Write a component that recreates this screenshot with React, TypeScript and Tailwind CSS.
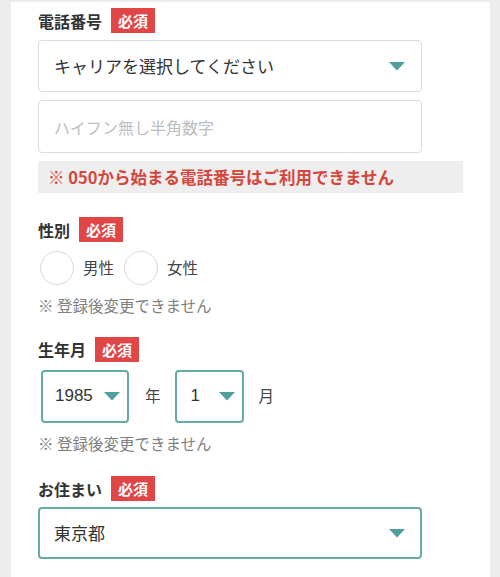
import React from "react";

const font = { fontFamily: '"Noto Sans CJK JP", "Noto Sans", sans-serif' };

function Tri() {
  return (
    <svg width="16" height="9" viewBox="0 0 16 9" className="shrink-0">
      <polygon points="0,0 16,0 8,8.5" fill="#4e9e9b" />
    </svg>
  );
}

function Label({ text }: { text: string }) {
  return (
    <div className="flex items-center h-[25px]">
      <span className="text-[16px] font-bold text-[#333] leading-none">{text}</span>
      <span className="ml-[9px] h-[25px] px-[7px] bg-[#e04646] text-white text-[15px] font-bold leading-[25px]">必須</span>
    </div>
  );
}

function Note({ className = "" }: { className?: string }) {
  return <div className={"text-[15.5px] text-[#808080] leading-none " + className}>※ 登録後変更できません</div>;
}

export default function App() {
  return (
    <div className="w-[500px] h-[577px] bg-[#ededed] pt-[2px] pl-[11px] pr-[10px] overflow-hidden" style={font}>
      <div className="bg-white h-full pl-[27px] pt-[6px]">
        <Label text="電話番号" />
        <div className="mt-[7px] w-[384px] h-[52px] border border-[#dcdcdc] rounded-[4px] flex items-center justify-between pl-[15px] pr-[16px]">
          <span className="text-[17px] text-[#333]">キャリアを選択してください</span>
          <Tri />
        </div>
        <div className="mt-[8px] w-[384px] h-[53px] border border-[#dcdcdc] rounded-[4px] flex items-center pl-[15px]">
          <span className="text-[16px] text-[#bdbdbd]">ハイフン無し半角数字</span>
        </div>
        <div className="mt-[8px] w-[425px] h-[32px] bg-[#eeeeee] flex items-center pl-[10px]">
          <span className="text-[16.5px] font-bold text-[#d6453a]">※ 050から始まる電話番号はご利用できません</span>
        </div>

        <div className="mt-[24px]">
          <Label text="性別" />
        </div>
        <div className="mt-[9px] flex items-center pl-[2px]">
          <span className="w-[34px] h-[34px] rounded-full border border-[#d8d8d8]" />
          <span className="ml-[9px] text-[15.5px] text-[#444]">男性</span>
          <span className="ml-[10px] w-[34px] h-[34px] rounded-full border border-[#d8d8d8]" />
          <span className="ml-[9px] text-[15.5px] text-[#444]">女性</span>
        </div>
        <Note className="mt-[13px]" />

        <div className="mt-[23px]">
          <Label text="生年月" />
        </div>
        <div className="mt-[8px] flex items-center pl-[3px]">
          <div className="w-[88px] h-[53px] border-2 border-[#66aaa6] rounded-[4px] flex items-center justify-between pl-[12px] pr-[7px]">
            <span className="text-[17px] text-[#333]" style={{ fontFamily: '"Liberation Sans", sans-serif' }}>1985</span>
            <Tri />
          </div>
          <span className="ml-[16px] text-[15.5px] text-[#444]">年</span>
          <div className="ml-[14px] w-[69px] h-[53px] border-2 border-[#66aaa6] rounded-[4px] flex items-center justify-between pl-[14px] pr-[7px]">
            <span className="text-[17px] text-[#333]" style={{ fontFamily: '"Liberation Sans", sans-serif' }}>1</span>
            <Tri />
          </div>
          <span className="ml-[15px] text-[15.5px] text-[#444]">月</span>
        </div>
        <Note className="mt-[13px]" />

        <div className="mt-[25px]">
          <Label text="お住まい" />
        </div>
        <div className="mt-[6px] w-[384px] h-[52px] border-2 border-[#66aaa6] rounded-[4px] flex items-center justify-between pl-[14px] pr-[15px]">
          <span className="text-[17px] text-[#333]">東京都</span>
          <Tri />
        </div>
      </div>
    </div>
  );
}
